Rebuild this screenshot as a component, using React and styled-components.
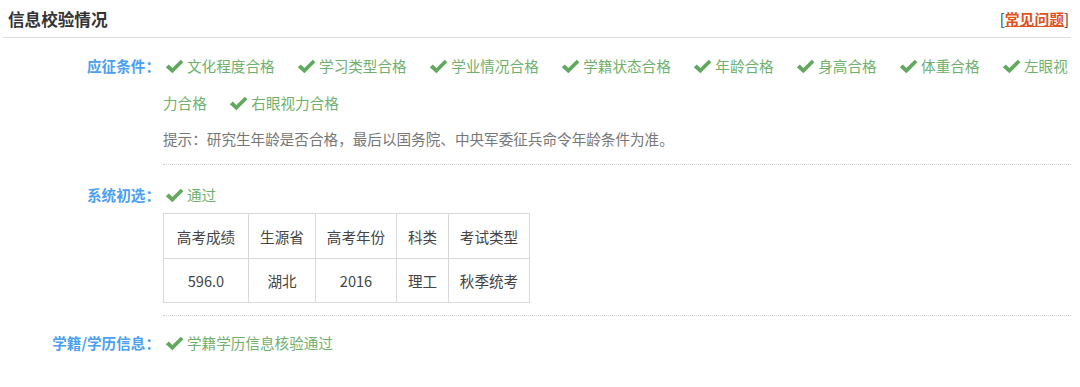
import React from "react"
import styled, { createGlobalStyle } from "styled-components"

const GlobalStyle = createGlobalStyle`
  body {
    margin: 0;
    background: #fff;
    font-family: "Noto Sans CJK SC", "Noto Sans", sans-serif;
    color: #333;
  }
`

const Panel = styled.div`
  width: 1068px;
  margin-left: 3px;
`

const Header = styled.div`
  display: flex;
  align-items: center;
  justify-content: space-between;
  height: 37px;
  padding: 0 2px 0 5px;
  border-bottom: 1px solid #dcdcdc;
  margin-bottom: 9px;
`

const Title = styled.h2`
  margin: 0;
  font-size: 16.6px;
  font-weight: 700;
  color: #333;
`

const Help = styled.span`
  font-size: 14.8px;
  color: #333;

  a {
    color: #e2511f;
    font-weight: 700;
    text-decoration: underline;
  }
`

const Section = styled.div`
  display: grid;
  grid-template-columns: 157px 1fr;
  column-gap: 3px;
`

const Label = styled.div`
  text-align: right;
  font-size: 14.6px;
  font-weight: 700;
  color: #4ba0f3;
  line-height: 37px;
  padding-top: ${p => p.$top || 0}px;
  white-space: nowrap;
`

const Body = styled.div`
  padding-top: ${p => p.$top || 0}px;
  padding-bottom: ${p => p.$bottom || 0}px;
  border-bottom: ${p => (p.$last ? "none" : "1px dotted #cfcfcf")};
`

const Items = styled.div`
  font-size: 14.6px;
  line-height: 37px;
  color: #6fb06c;
`

const Item = styled.span`
  margin-right: 20.5px;
`

const CheckIcon = styled.svg`
  width: 19px;
  height: 15px;
  margin: 0 3px 0 2px;
  vertical-align: -2px;
`

const Hint = styled.div`
  margin-top: 3px;
  font-size: 14.6px;
  line-height: 30px;
  color: #777;
`

const Table = styled.table`
  border-collapse: collapse;
  table-layout: fixed;
  font-size: 14.6px;
  color: #444;

  td {
    border: 1px solid #d9d9d9;
    text-align: center;
    padding: 0;
  }

  tr:first-child td {
    height: 44px;
  }

  tr:last-child td {
    height: 43px;
  }
`

const Check = () => (
  <CheckIcon viewBox="0 0 19 15">
    <path d="M0.8 8.2 L3.8 5.6 L7.4 9 L15.8 0.8 L18.4 3.3 L7.4 14.2 Z" fill="#62a95f" />
  </CheckIcon>
)

const conditions = [
  "文化程度合格",
  "学习类型合格",
  "学业情况合格",
  "学籍状态合格",
  "年龄合格",
  "身高合格",
  "体重合格",
  "左眼视力合格",
  "右眼视力合格",
]

const scores = [
  ["高考成绩", "596.0", 85],
  ["生源省", "湖北", 67],
  ["高考年份", "2016", 81],
  ["科类", "理工", 52],
  ["考试类型", "秋季统考", 81],
]

export default function App() {
  return (
    <>
      <GlobalStyle />
      <Panel>
        <Header>
          <Title>信息校验情况</Title>
          <Help>
            [<a>常见问题</a>]
          </Help>
        </Header>

        <Section>
          <Label>应征条件：</Label>
          <Body $bottom={10}>
            <Items>
              {conditions.map(c => (
                <Item key={c}>
                  <Check />
                  {c}
                </Item>
              ))}
            </Items>
            <Hint>提示：研究生年龄是否合格，最后以国务院、中央军委征兵命令年龄条件为准。</Hint>
          </Body>
        </Section>

        <Section>
          <Label $top={11}>系统初选：</Label>
          <Body $top={11} $bottom={12}>
            <Items>
              <Item>
                <Check />
                通过
              </Item>
            </Items>
            <Table>
              <colgroup>
                {scores.map(s => (
                  <col key={s[0]} style={{ width: s[2] }} />
                ))}
              </colgroup>
              <tbody>
                <tr>
                  {scores.map(s => (
                    <td key={s[0]}>{s[0]}</td>
                  ))}
                </tr>
                <tr>
                  {scores.map(s => (
                    <td key={s[0]}>{s[1]}</td>
                  ))}
                </tr>
              </tbody>
            </Table>
          </Body>
        </Section>

        <Section>
          <Label $top={8}>学籍/学历信息：</Label>
          <Body $top={8} $last>
            <Items>
              <Item>
                <Check />
                学籍学历信息核验通过
              </Item>
            </Items>
          </Body>
        </Section>
      </Panel>
    </>
  )
}
